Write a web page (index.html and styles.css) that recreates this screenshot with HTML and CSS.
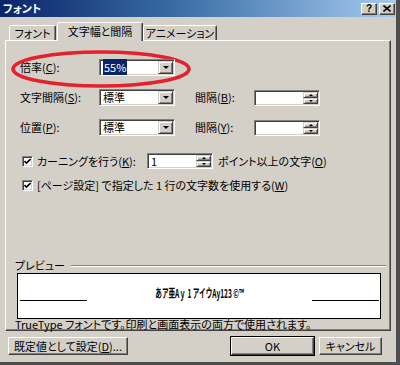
FILE: index.html
```html
<!DOCTYPE html>
<html lang="ja">
<head>
<meta charset="utf-8">
<link rel="stylesheet" href="styles.css">
</head>
<body>
<div class="window">
  <div class="titlebar">
    <span class="title">フォント</span>
    <div class="tbtns">
      <span class="tbtn q">?</span>
      <span class="tbtn"><svg width="8" height="7" viewBox="0 0 8 7"><path d="M0.5 0.5 L7.5 6.5 M7.5 0.5 L0.5 6.5" stroke="#000" stroke-width="1.6"/></svg></span>
    </div>
  </div>

  <div class="tabs">
    <div class="tab t1">フォント</div>
    <div class="tab t2 active">文字幅と間隔</div>
    <div class="tab t3">アニメーション</div>
  </div>

  <div class="panel">
    <div class="grid">
      <span class="lbl">倍率(<u>C</u>):</span>
      <div class="combo field"><span class="val"><span class="sel">55%</span></span><span class="dd"><i class="tri"></i></span></div>
      <span></span><span></span>

      <span class="lbl">文字間隔(<u>S</u>):</span>
      <div class="combo field"><span class="val">標準</span><span class="dd"><i class="tri"></i></span></div>
      <span class="lbl">間隔(<u>B</u>):</span>
      <div class="spin field"><span class="val"></span><span class="arrows"><span class="ar"><i class="tri up"></i></span><span class="ar"><i class="tri"></i></span></span></div>

      <span class="lbl">位置(<u>P</u>):</span>
      <div class="combo field"><span class="val">標準</span><span class="dd"><i class="tri"></i></span></div>
      <span class="lbl">間隔(<u>Y</u>):</span>
      <div class="spin field"><span class="val"></span><span class="arrows"><span class="ar"><i class="tri up"></i></span><span class="ar"><i class="tri"></i></span></span></div>
    </div>

    <div class="crow kern">
      <span class="cb field"><svg width="7" height="7" viewBox="0 0 7 7"><path d="M0.5 3 L2.5 5 L6.5 1" stroke="#000" stroke-width="1.6" fill="none"/></svg></span>
      <span class="clbl">カーニングを行う(<u>K</u>):</span>
      <div class="spin field kspin"><span class="val">1</span><span class="arrows"><span class="ar"><i class="tri up"></i></span><span class="ar"><i class="tri"></i></span></span></div>
      <span class="after">ポイント以上の文字(<u>O</u>)</span>
    </div>

    <div class="crow grid2">
      <span class="cb field"><svg width="7" height="7" viewBox="0 0 7 7"><path d="M0.5 3 L2.5 5 L6.5 1" stroke="#000" stroke-width="1.6" fill="none"/></svg></span>
      <span class="clbl2">[ページ設定] で指定した 1 行の文字数を使用する(<u>W</u>)</span>
    </div>

    <div class="preview">
      <div class="phead"><span>プレビュー</span><span class="groove"></span></div>
      <div class="pbox">
        <span class="pline"></span>
        <span class="ptext"><span class="sample">あア亜Aｙ 1 アイウAy123 ©™</span></span>
        <span class="pline r"></span>
      </div>
      <div class="note">TrueType フォントです。印刷と画面表示の両方で使用されます。</div>
    </div>
  </div>

  <div class="buttons">
    <span class="btn b-def">既定値として設定(<u>D</u>)...</span>
    <span class="spacer"></span>
    <span class="btn b-ok">OK</span>
    <span class="btn b-cancel">キャンセル</span>
  </div>

  <svg class="oval" width="184" height="42" viewBox="0 0 184 42"><ellipse cx="91" cy="20" rx="88" ry="17" fill="none" stroke="#e3222d" stroke-width="3.6"/></svg>
</div>
</body>
</html>
```

FILE: styles.css
```css
* { box-sizing: border-box; }
html, body { margin: 0; padding: 0; background: #d4d0c8; }
body {
  font-family: "Noto Sans CJK JP", "Liberation Sans", sans-serif;
  font-size: 11px;
  color: #000;
  font-feature-settings: "palt";
}
u { text-decoration: underline; text-underline-offset: 1px; }

.window {
  position: relative;
  width: 400px;
  height: 365px;
  background: #d4d0c8;
  border-right: 4px solid #4e4e4e;
  border-bottom: 3px solid #4e4e4e;
  overflow: hidden;
}

.titlebar {
  height: 17px;
  background: linear-gradient(to right, #0a246a 0%, #3a6ea5 45%, #a6caf0 100%);
  display: flex;
  align-items: center;
  justify-content: space-between;
  padding: 0 1px 0 3px;
}
.title { color: #fff; font-weight: bold; font-size: 11px; line-height: 17px; }
.tbtns { display: flex; gap: 2px; }
.tbtn {
  width: 16px; height: 12px;
  background: #d4d0c8;
  border: 1px solid; border-color: #fff #404040 #404040 #fff;
  box-shadow: inset -1px -1px #808080;
  display: flex; align-items: center; justify-content: center;
  font: bold 10px "Liberation Sans", sans-serif;
  line-height: 10px;
}

.tabs {
  height: 24px;
  display: flex;
  align-items: flex-end;
  padding-left: 9px;
  position: relative;
  z-index: 2;
  margin-bottom: -1px;
}
.tab {
  height: 15px;
  margin-bottom: 1px;
  background: #d4d0c8;
  border: 1px solid; border-bottom: none;
  border-color: #fff #404040 transparent #fff;
  box-shadow: inset -1px 0 #808080;
  border-radius: 2px 2px 0 0;
  display: flex; align-items: center; justify-content: center;
  line-height: 13px;
  padding-top: 1px;
  white-space: nowrap;
}
.t1 { width: 47px; }
.t2 { width: 86px; margin-left: 1px; }
.t3 { width: 74px; }
.tab.active { height: 19px; margin-bottom: 0; padding-bottom: 2px; padding-top: 0; }

.panel {
  position: relative;
  z-index: 1;
  margin-left: 5px;
  width: 386px;
  height: 291px;
  border: 1px solid;
  border-color: #fff #404040 #404040 #fff;
  box-shadow: inset -1px -1px #808080;
  padding-top: 18px;
}

.grid {
  display: grid;
  grid-template-columns: 79px 96px 59px 66px;
  grid-auto-rows: 17px;
  row-gap: 13px;
  align-items: center;
  margin-left: 14px;
}
.lbl { white-space: nowrap; line-height: 13px; }

.field {
  background: #fff;
  border: 1px solid;
  border-color: #808080 #fff #fff #808080;
  box-shadow: inset 1px 1px #404040, inset -1px -1px #d4d0c8;
}
.combo {
  width: 76px; height: 17px;
  display: flex;
  padding: 1px;
}
.combo .val { flex: 1; padding-left: 2px; line-height: 13px; white-space: nowrap; }
.sel { background: #0a246a; color: #fff; padding: 0 1px; }
.dd {
  width: 15px; height: 13px;
  background: #d4d0c8;
  border: 1px solid; border-color: #d4d0c8 #404040 #404040 #d4d0c8;
  box-shadow: inset 1px 1px #fff, inset -1px -1px #808080;
  display: flex; align-items: center; justify-content: center;
}
.tri {
  display: block; width: 0; height: 0;
  border-left: 3px solid transparent;
  border-right: 3px solid transparent;
  border-top: 3px solid #000;
}
.tri.up { border-top: none; border-bottom: 3px solid #000; }

.spin {
  width: 66px; height: 16px;
  display: flex;
  padding: 1px;
}
.spin .val { flex: 1; padding-left: 2px; line-height: 12px; }
.arrows { width: 15px; display: flex; flex-direction: column; }
.ar {
  flex: 1;
  background: #d4d0c8;
  border: 1px solid; border-color: #d4d0c8 #404040 #404040 #d4d0c8;
  box-shadow: inset 1px 1px #fff, inset -1px -1px #808080;
  display: flex; align-items: center; justify-content: center;
}
.ar .tri { border-left-width: 2px; border-right-width: 2px; border-top-width: 2px; }
.ar .tri.up { border-bottom-width: 2px; }

.crow {
  display: flex;
  align-items: center;
  margin-left: 16px;
  white-space: nowrap;
}
.kern { margin-top: 17px; height: 16px; }
.grid2 { margin-top: 8px; height: 16px; }
.cb {
  width: 11px; height: 11px;
  display: flex; align-items: center; justify-content: center;
}
.clbl { width: 110px; margin-left: 4px; line-height: 13px; }
.clbl2 { margin-left: 4px; line-height: 13px; }
.kspin { width: 66px; }
.after { margin-left: 5px; }

.preview { margin-top: 66px; margin-left: 9px; width: 369px; }
.phead { display: flex; align-items: center; height: 13px; line-height: 13px; }
.groove {
  flex: 1;
  margin-left: 6px;
  height: 2px;
  border-top: 1px solid #808080;
  border-bottom: 1px solid #fff;
  margin-right: -2px;
}
.pbox {
  margin: 1px 0 0 2px;
  width: 364px; height: 46px;
  background: #fff;
  border: 1px solid #000;
  display: flex;
  align-items: flex-start;
  padding: 0 1px 0 2px;
}
.pline { width: 67px; height: 1px; background: #000; margin-top: 26px; flex: none; }
.ptext { flex: 1; text-align: center; padding-top: 13px; line-height: 12px; }
.sample {
  display: inline-block;
  font-size: 12px;
  font-weight: bold;
  font-feature-settings: normal;
  transform: scaleX(0.55);
  white-space: nowrap;
}
.note { line-height: 11px; margin-top: 0; white-space: nowrap; }

.buttons {
  display: flex;
  margin-top: 6px;
  padding-left: 8px;
  height: 18px;
}
.spacer { flex: 1; }
.btn {
  height: 18px;
  background: #d4d0c8;
  border: 1px solid; border-color: #fff #404040 #404040 #fff;
  box-shadow: inset -1px -1px #808080;
  display: flex; align-items: center; justify-content: center;
  line-height: 14px;
  white-space: nowrap;
}
.b-def { width: 120px; }
.b-ok { width: 83px; outline: 1px solid #000; margin-right: 5px; }
.b-cancel { width: 63px; margin-right: 14px; }

.oval { position: absolute; left: 10px; top: 49px; }
```
